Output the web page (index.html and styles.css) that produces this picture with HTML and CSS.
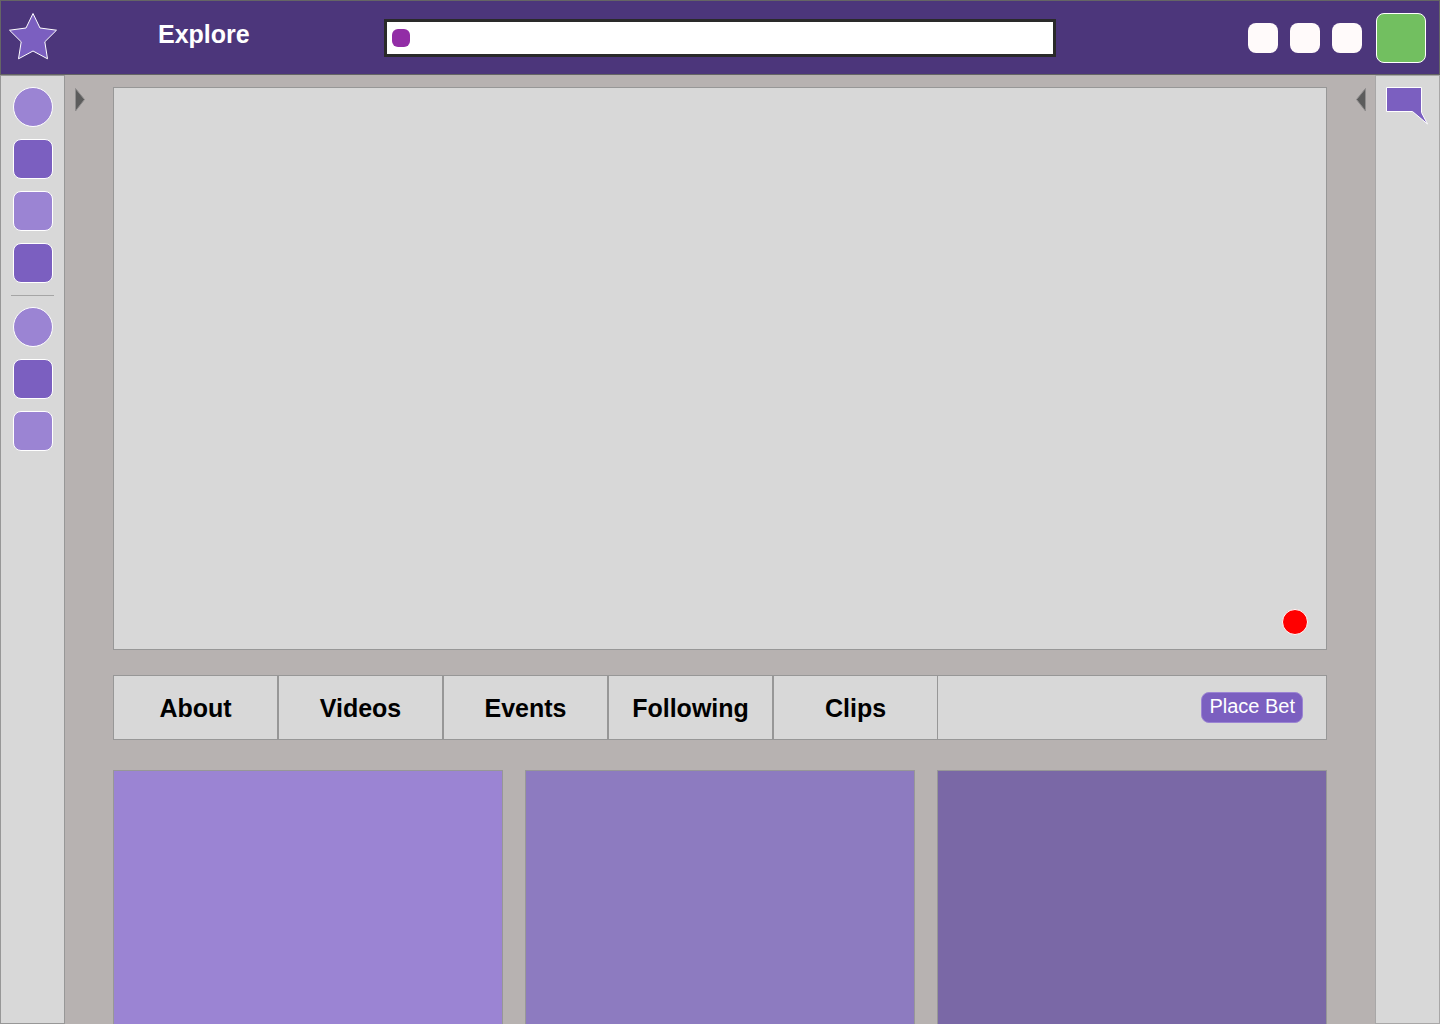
FILE: index.html
```html
<!DOCTYPE html>
<html lang="en">
<head>
  <meta charset="utf-8">
  <meta name="viewport" content="width=device-width, initial-scale=1">
  <title>Channel</title>
  <link rel="stylesheet" href="styles.css">
</head>
<body>
  <header class="topbar">
    <div class="topbar-start">
      <a class="logo" href="#" aria-label="Home">
        <svg width="50" height="50" viewBox="0 0 50 50" aria-hidden="true">
          <path d="M25 .5 32 15 48.5 17.2 36.8 28.8 39.5 45.8 25 38 10.500 45.800 13.200 28.800 1.500 17.200 18 15Z" fill="#7b5fc0" stroke="#fff" stroke-width="1"/>
        </svg>
      </a>
      <a class="explore" href="#">Explore</a>
    </div>
    <form class="search" role="search">
      <button class="search-button" type="submit" aria-label="Search"></button>
      <input class="search-input" type="text" aria-label="Search channels">
    </form>
    <div class="topbar-end">
      <div class="actions">
        <button class="action" type="button" aria-label="Notifications"></button>
        <button class="action" type="button" aria-label="Messages"></button>
        <button class="action" type="button" aria-label="Settings"></button>
      </div>
      <button class="avatar" type="button" aria-label="Account"></button>
    </div>
  </header>

  <div class="shell">
    <nav class="rail" aria-label="Channels">
      <div class="rail-group">
        <a class="tile tile-round" href="#" aria-label="Followed channels"></a>
        <a class="tile tile-dark" href="#" aria-label="Followed channel 1"></a>
        <a class="tile" href="#" aria-label="Followed channel 2"></a>
        <a class="tile tile-dark" href="#" aria-label="Followed channel 3"></a>
      </div>
      <div class="rail-group">
        <a class="tile tile-round" href="#" aria-label="Suggested channels"></a>
        <a class="tile tile-dark" href="#" aria-label="Suggested channel 1"></a>
        <a class="tile" href="#" aria-label="Suggested channel 2"></a>
      </div>
    </nav>

    <main class="main">
      <button class="toggle" type="button" aria-label="Expand channels">
        <svg width="12" height="26" viewBox="0 0 12 26" aria-hidden="true">
          <path d="M1.500 1.500 10.500 12.500 1.500 24Z" fill="#5c5c5c" stroke="#8f8d8d" stroke-width="1"/>
        </svg>
      </button>
      <div class="content">
        <section class="player" aria-label="Stream">
          <button class="live" type="button" aria-label="Live"></button>
        </section>
        <div class="tabs">
          <nav class="tab-list" aria-label="Channel sections">
            <a class="tab" href="#">About</a>
            <a class="tab" href="#">Videos</a>
            <a class="tab" href="#">Events</a>
            <a class="tab" href="#">Following</a>
            <a class="tab" href="#">Clips</a>
          </nav>
          <div class="tab-actions">
            <button class="bet" type="button">Place Bet</button>
          </div>
        </div>
        <section class="cards" aria-label="Highlights">
          <article class="card card-light"></article>
          <article class="card card-mid"></article>
          <article class="card card-deep"></article>
        </section>
      </div>
      <button class="toggle" type="button" aria-label="Expand chat">
        <svg width="12" height="26" viewBox="0 0 12 26" aria-hidden="true">
          <path d="M10.500 1.500 1.500 12.500 10.500 24Z" fill="#5c5c5c" stroke="#8f8d8d" stroke-width="1"/>
        </svg>
      </button>
    </main>

    <aside class="rail rail-end" aria-label="Chat">
      <button class="chat" type="button" aria-label="Open chat">
        <svg width="43" height="39" viewBox="0 0 43 39" aria-hidden="true">
          <path d="M.5.5H35.500V25.500L41.500 37 26.500 24.500H.5Z" fill="#7b5fc0" stroke="#fff" stroke-width="1"/>
        </svg>
      </button>
    </aside>
  </div>
</body>
</html>
```
FILE: styles.css
```css
:root {
  --violet: #7b5fc0;
  --lilac: #9b84d3;
  --panel: #d8d8d8;
  --line: #979797;
}

*,
*::before,
*::after {
  box-sizing: border-box;
}

body {
  margin: 0;
  min-height: 100vh;
  display: flex;
  flex-direction: column;
  background: #b7b2b1;
  color: #000;
  font-family: "Liberation Sans", Arial, sans-serif;
}

a {
  color: inherit;
  text-decoration: none;
}

button {
  margin: 0;
  padding: 0;
  border: 0;
  background: none;
  font: inherit;
  cursor: pointer;
}

svg {
  display: block;
}

/* Top bar */
.topbar {
  display: grid;
  grid-template-columns: 1fr minmax(0, 672px) 1fr;
  align-items: center;
  padding: 12px 0 11px;
  border: 1px solid #656565;
  background: #4c367b;
}

.topbar-start {
  display: flex;
  align-items: center;
  gap: 100px;
  padding-left: 7px;
}

.explore {
  padding-bottom: 8px;
  color: #fff;
  font-size: 25px;
  font-weight: bold;
  line-height: 28px;
}

.search {
  display: flex;
  align-items: center;
  gap: 6px;
  height: 38px;
  padding: 0 5px;
  border: 3px solid #2a2a2a;
  background: #fff;
}

.search-button {
  flex: none;
  width: 18px;
  height: 18px;
  border-radius: 6px;
  background: #922da6;
}

.search-input {
  flex: 1;
  min-width: 0;
  height: 28px;
  padding: 0;
  border: 0;
  outline: 0;
  background: transparent;
  font: inherit;
  font-size: 20px;
}

.topbar-end {
  display: flex;
  align-items: center;
  justify-content: flex-end;
  gap: 14px;
  padding-right: 13px;
}

.actions {
  display: flex;
  gap: 12px;
}

.action {
  width: 30px;
  height: 30px;
  border-radius: 8px;
  background: #fffafa;
}

.avatar {
  width: 50px;
  height: 50px;
  border: 1px solid #fff;
  border-radius: 8px;
  background: #72bf60;
}

/* Page body */
.shell {
  flex: 1;
  display: flex;
}

.rail {
  flex: none;
  width: 65px;
  padding: 11px 10px;
  border: 1px solid var(--line);
  background: var(--panel);
}

.rail-end {
  border-color: #a8a7a7;
}

.rail-group {
  display: flex;
  flex-direction: column;
  gap: 12px;
  padding-left: 2px;
}

.rail-group + .rail-group {
  margin-top: 12px;
  padding-top: 11px;
  border-top: 1px solid #a5a5a5;
}

.tile {
  width: 40px;
  height: 40px;
  border: 1px solid #fff;
  border-radius: 8px;
  background: var(--lilac);
}

.tile-dark {
  background: var(--violet);
}

.tile-round {
  border-radius: 50%;
}

.main {
  flex: 1;
  min-width: 0;
  display: flex;
  align-items: flex-start;
  padding-top: 12px;
}

.toggle {
  flex: none;
  width: 48px;
  padding: 0 9px;
}

.toggle:last-child svg {
  margin-left: auto;
}

.toggle:last-child {
  padding-right: 8px;
}

.content {
  flex: 1;
  min-width: 0;
  align-self: stretch;
  display: flex;
  flex-direction: column;
}

.player {
  position: relative;
  aspect-ratio: 1214 / 563;
  border: 1px solid var(--line);
  background: var(--panel);
}

.live {
  position: absolute;
  right: 18px;
  bottom: 14px;
  width: 26px;
  height: 26px;
  border: 1px solid #fff;
  border-radius: 50%;
  background: #f00;
}

.tabs {
  display: flex;
  margin-top: 25px;
  background: var(--panel);
}

.tab-list {
  display: flex;
}

.tab {
  width: 165px;
  padding: 18px 0 17px;
  border: 1px solid var(--line);
  font-size: 25px;
  font-weight: bold;
  line-height: 28px;
  text-align: center;
}

.tab-actions {
  flex: 1;
  display: flex;
  align-items: center;
  justify-content: flex-end;
  padding-right: 23px;
  border: 1px solid var(--line);
  border-left: 0;
}

.bet {
  padding: 2px 7px 4px;
  border: 1px solid var(--lilac);
  border-radius: 8px;
  background: var(--violet);
  color: #fff;
  font-size: 20px;
  line-height: 23px;
}

.cards {
  flex: 1;
  display: grid;
  grid-template-columns: repeat(3, 1fr);
  gap: 22px;
  margin-top: 30px;
}

.card {
  min-height: 200px;
  border: 1px solid var(--line);
  border-bottom: 0;
}

.card-light {
  background: var(--lilac);
}

.card-mid {
  background: #8d7bc0;
}

.card-deep {
  background: #7a68a6;
}
```
